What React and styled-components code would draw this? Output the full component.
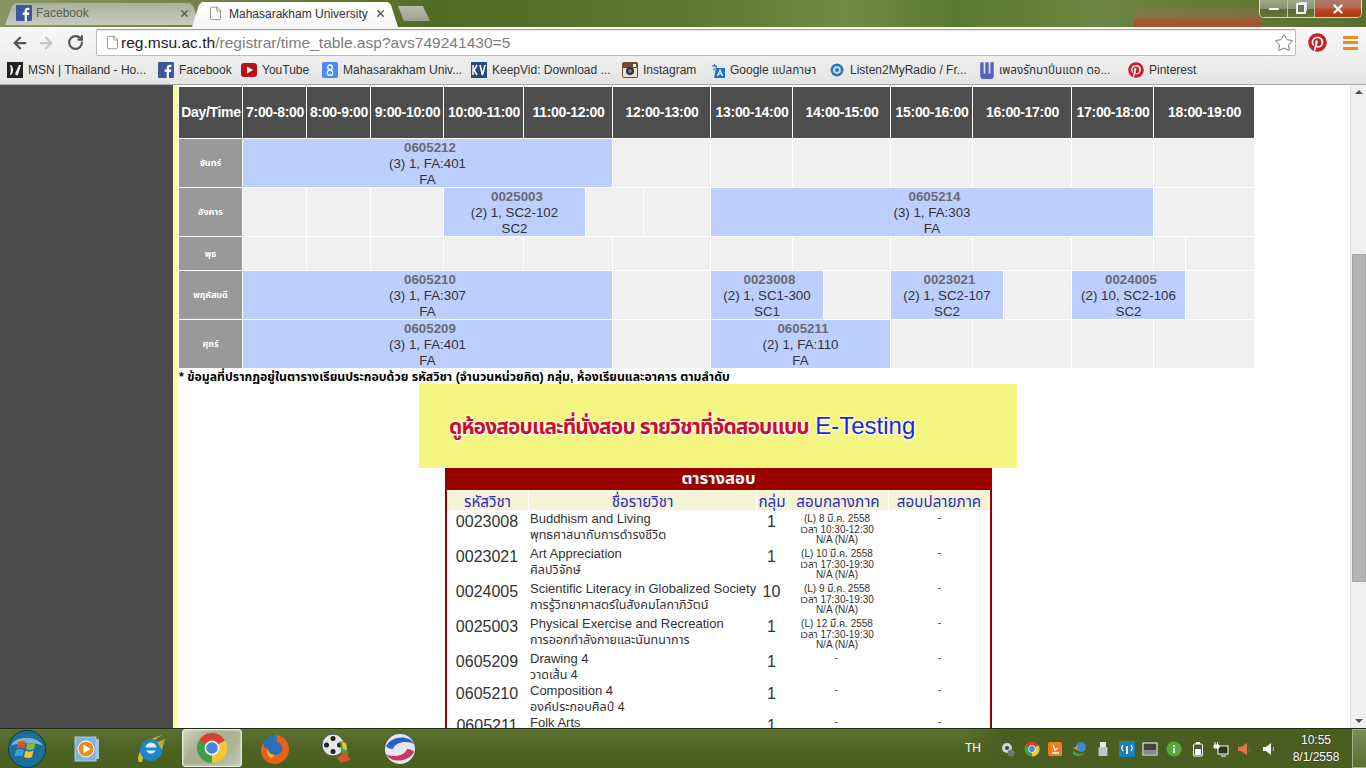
import React from 'react';
import styled, { createGlobalStyle } from 'styled-components';
import { ArrowLeft, ArrowRight, RotateCw, Star, X, Minus, File } from 'lucide-react';
import { FaPinterest } from 'react-icons/fa';

const FONT = '"Liberation Sans", "Noto Sans Thai", "Noto Sans", sans-serif';

const Global = createGlobalStyle`
  html, body { margin: 0; padding: 0; height: 100%; overflow: hidden; background: #4c4c4c; }
  * { box-sizing: border-box; }
  body { font-family: ${FONT}; }
`;

const Screen = styled.div`
  width: 1366px; height: 768px; display: flex; flex-direction: column; overflow: hidden;
`;

/* ---------- browser chrome ---------- */
const TitleBar = styled.div`
  height: 27px; display: flex; align-items: flex-end; padding-left: 5px; position: relative;
  background:
    linear-gradient(180deg, transparent 7px, rgba(150,110,90,.45) 10px, rgba(150,105,85,.5) 17px, #a9572f 20px, #a5532c 27px) 1134px 0 / 128px 27px no-repeat,
    linear-gradient(90deg, #8a9566 0, #66762f 25%, #4f6b24 32%, #5f7a31 52%, #6f8b42 62%, #5a7a2e 70%, #6c8540 80%, #596f2c 100%);
`;
const TabShape = styled.div`
  height: ${p => (p.$active ? 25 : 22)}px;
  width: ${p => p.$w}px;
  margin-left: ${p => p.$ml || 0}px;
  margin-bottom: ${p => (p.$active ? 0 : 2)}px;
  display: flex; align-items: center; gap: ${p => (p.$active ? 6 : 4)}px;
  padding: 0 ${p => (p.$active ? 12 : 10)}px 2px ${p => (p.$active ? 16 : 11)}px;
  font-size: 12px; white-space: nowrap;
  color: ${p => (p.$active ? '#333' : '#5a6050')};
  position: relative; z-index: ${p => (p.$active ? 2 : 1)};
  clip-path: polygon(0 100%, 7px 3px, 10px 0, calc(100% - 10px) 0, calc(100% - 7px) 3px, 100% 100%);
  background: ${p => (p.$active ? 'linear-gradient(180deg,#fff,#f6f6f6)' : 'linear-gradient(180deg,#a9b196,#c8cbc0)')};
`;
const TabLabel = styled.span`flex: 1; overflow: hidden;`;
const NewTab = styled.div`
  width: 32px; height: 15px; margin: 0 0 6px 0; background: linear-gradient(180deg,#b9bcae,#9da18c);
  clip-path: polygon(0 0, 78% 0, 100% 100%, 18% 100%);
`;
const WinControls = styled.div`
  margin-left: auto; margin-right: 4px; align-self: flex-start; height: 18px; width: 103px;
  display: flex; border: 1px solid #d5dcc8; border-top: none; border-radius: 0 0 5px 5px; overflow: hidden;
`;
const WinBtn = styled.div`
  width: ${p => p.$w}px; display: flex; align-items: center; justify-content: center; color: #fff;
  border-right: ${p => (p.$last ? 'none' : '1px solid #b9c2a5')};
  background: ${p => (p.$close
    ? 'linear-gradient(180deg,#b0786a 0,#b46a55 45%,#c0421b 60%,#a73b1d 100%)'
    : 'linear-gradient(180deg,#9fa88a 0,#8a9472 50%,#5b6b32 55%,#63733a 100%)')};
`;
const MaxGlyph = styled.div`
  width: 10px; height: 11px; border: 2px solid #eef; box-shadow: 2px -2px 0 -1px #dde; background: #6b7a48;
`;

const Toolbar = styled.div`
  height: 31px; display: flex; align-items: center; padding: 0 8px 0 11px;
  background: linear-gradient(180deg,#f8f8f8,#eeeeee);
`;
const NavBtn = styled.div`
  width: ${p => p.$w}px; display: flex; align-items: center; color: ${p => p.$c};
`;
const Omnibox = styled.div`
  width: 1201px; margin-left: 3px; height: 27px; background: #fff; border: 1px solid #bdbdbd; border-top-color: #9f9f9f;
  border-radius: 2px; display: flex; align-items: center; padding: 0 1px 0 8px;
  box-shadow: inset 0 1px 1px rgba(0,0,0,.08);
`;
const Url = styled.div`
  flex: 1; margin-left: 1px; font-size: 15.55px; color: #222; white-space: nowrap;
`;
const UrlPath = styled.span`color: #7d7d7d;`;
const PinBtn = styled.div`margin-left: 12px; display: flex; color: #c8202a;`;
const Menu = styled.div`
  margin-left: 16px; width: 15px; height: 14px; display: flex; flex-direction: column; justify-content: space-between;
`;
const MenuBar = styled.div`height: 3px; background: #ec8c1c;`;

const Bookmarks = styled.div`
  height: 27px; display: flex; align-items: center; padding: 0 0 2px 7px;
  background: linear-gradient(180deg,#eeeeee,#e4e4e4); border-bottom: 1px solid #a6a6a6;
`;
const Bookmark = styled.div`
  width: ${p => p.$w}px; display: flex; align-items: center; gap: ${p => p.$gap ?? 5}px;
  font-size: 12px; color: #333; white-space: nowrap;
`;
const BookmarkThai = styled.span`font-size: 11.7px;`;
const IconBox = styled.svg`flex: none; display: block;`;

/* ---------- page ---------- */
const Page = styled.div`flex: 1; min-height: 0; display: flex; background: #fff; overflow: hidden;`;
const SideGrey = styled.div`width: 173px; flex: none; background: #4c4c4c;`;
const Content = styled.div`
  width: 1177px; flex: none; border-left: 5px solid #ffff99; background: #fff; overflow: hidden;
  display: flex; flex-direction: column; padding-top: 2px;
`;
const Scrollbar = styled.div`
  width: 16px; flex: none; background: #f0f0f0; border-left: 1px solid #e6e6e6; display: flex; flex-direction: column; align-items: center;
`;
const ArrowUp = styled.div`
  margin-top: 5px; width: 0; height: 0; border: 4px solid transparent; border-top: none; border-bottom: 4px solid #505050;
`;
const ArrowDown = styled.div`
  margin: auto 0 5px; width: 0; height: 0; border: 4px solid transparent; border-bottom: none; border-top: 4px solid #505050;
`;
const Thumb = styled.div`margin-top: 160px; width: 14px; height: 328px; background: #b4b4b4; border: 1px solid #a8a8a8;`;

const Sheet = styled.div`width: 1080px; display: flex; flex-direction: column; align-items: center;`;
const Timetable = styled.div`
  align-self: flex-start; margin-left: 1px; width: 1075px; display: flex; flex-direction: column; gap: 1px;
`;
const TRow = styled.div`
  display: grid; grid-template-columns: ${p => p.$cols}; column-gap: 1px; min-height: ${p => p.$h}px;
`;
const HeadCell = styled.div`
  background: #4d4d4d; color: #fff; font-weight: 700; font-size: 14px; letter-spacing: -.32px; padding: 0 0 2px 1px;
  display: flex; align-items: center; justify-content: center; white-space: nowrap;
`;
const DayCell = styled.div`
  background: #999; color: #fff; font-weight: 700; font-size: 9px;
  display: flex; align-items: center; justify-content: center;
`;
const Empty = styled.div`background: #f0f0f0;`;
const Course = styled.div`
  background: #bccfff; color: #333; font-size: 13.33px; line-height: 16px; text-align: center; height: 48px; padding-top: 1px; overflow: hidden;
`;
const Code = styled.div`font-weight: 700; color: #6a6a72; padding-left: 5px;`;
const Note = styled.div`
  align-self: flex-start; margin-left: 1px; height: 16px; line-height: 18px; font-size: 12.3px; font-weight: 700; color: #000; white-space: nowrap;
`;
const Banner = styled.div`
  width: 598px; height: 84px; background: #f5f582; padding: 25px 0 0 30px; white-space: nowrap;
  line-height: 34px; text-shadow: 0 0 3px #fff, 0 0 3px #fff, 1px 1px 2px #fff;
`;
const BannerRed = styled.span`color: #c8102e; font-weight: 700; font-size: 21px; letter-spacing: -.9px;`;
const BannerBlue = styled.span`color: #1a28d8; font-weight: 400; font-size: 24px; margin-left: 2px;`;

const ExamBox = styled.div`
  width: 547px; border: solid #990000; border-width: 0 2px; flex: none; margin-left: 1px;
`;
const ExamTitle = styled.div`
  margin: 0 -2px; height: 22px; background: #990000; color: #fff; font-weight: 700; font-size: 16.7px;
  display: flex; align-items: center; justify-content: center;
`;
const EXAM_COLS = '82px 228px 31px 101px 101px';
const ExamHead = styled.div`
  display: grid; grid-template-columns: ${EXAM_COLS}; grid-template-rows: 20px; height: 20px;
`;
const ExamTh = styled.div`
  height: 20px; margin-right: 1px; background: #f5f5d5; color: #2a2ac8; font-size: 15.2px; text-align: center; line-height: 24px; white-space: nowrap;
`;
const ExamRow = styled.div`
  display: grid; grid-template-columns: ${EXAM_COLS}; grid-template-rows: ${p => p.$h}px; height: ${p => p.$h}px; color: #333;
`;
const ExamCode = styled.div`font-size: 16px; line-height: 24px; text-align: center; padding-right: 2px;`;
const ExamName = styled.div`padding: 1px 0 0 1px; font-size: 13px; line-height: 16px; white-space: nowrap;`;
const ExamThai = styled.div`font-size: 12.5px; line-height: 16px;`;
const ExamGroup = styled.div`font-size: 16px; line-height: 24px; text-align: center; padding-right: 2px;`;
const ExamDate = styled.div`font-size: 10px; line-height: 10.5px; text-align: center; padding-top: 4px; padding-right: 3px; white-space: nowrap;`;
const ExamDash = styled.div`font-size: 10px; line-height: 10.5px; text-align: center; padding-top: 3px; padding-right: ${p => p.$pr || 0}px;`;

/* ---------- taskbar ---------- */
const Taskbar = styled.div`
  height: 40px; flex: none; display: flex; align-items: center; border-top: 1px solid #232b10;
  background: linear-gradient(180deg,#5d7133 0,#4d6323 50%,#48601f 100%);
`;
const Orb = styled.div`width: 57px; display: flex; justify-content: center; padding-right: 3px;`;
const Apps = styled.div`display: flex; gap: 2.6px; height: 100%;`;
const AppBtn = styled.div`
  width: 60px; display: flex; align-items: center; justify-content: center;
  ${p => p.$active && `
    background: linear-gradient(135deg,#cfd4bd 0,#a7b08e 35%,#aeb596 70%,#c5cab4 100%);
    border: 1px solid #e6e8dc; border-radius: 3px; box-shadow: inset 0 0 2px #fff; margin: 0 0 1px;
  `}
`;
const Tray = styled.div`
  margin-left: auto; display: flex; align-items: center; height: 100%; color: #fff;
  background: linear-gradient(90deg, transparent, #4b5e22 40px);
`;
const Lang = styled.div`width: 35px; font-size: 12px; text-align: left; margin-top: -2px;`;
const TrayIcons = styled.div`display: flex; width: 284px; justify-content: space-between; align-items: center; padding-right: 7px;`;
const Clock = styled.div`
  width: 68px; font-size: 12px; line-height: 17px; text-align: center; padding-right: 4px; text-shadow: 0 0 2px #222;
`;
const ShowDesktop = styled.div`
  width: 14px; height: 100%; background: linear-gradient(180deg,#7d8b5a,#5b6e30);
  border: 1px solid #a6b088; border-right: none;
`;

/* ---------- drawings ---------- */
const Svg = ({ s = 16, v = 16, children }) => <IconBox width={s} height={s} viewBox={`0 0 ${v} ${v}`}>{children}</IconBox>;

const Fb = () => (
  <Svg><rect width="16" height="16" rx="1" fill="#3b5998" />
    <path d="M11 16v-6h2l.3-2.4H11V6.2c0-.7.2-1.2 1.2-1.2h1.2V2.9C13.2 2.8 12.5 2.8 11.7 2.8 9.9 2.8 8.7 3.9 8.7 5.9v1.7H6.700V10h2v6z" fill="#fff" /></Svg>
);
const Msn = () => (
  <Svg><rect width="16" height="16" fill="#222" />
    <path d="M3 3c2 0 3 2 3 5s-1 5-3 5c1-3 1-7 0-10zM8 12l4-9h2l-3 10c-1 1-2 0-3-1z" fill="#eee" /></Svg>
);
const Yt = () => (
  <Svg><rect y="1" width="16" height="14" rx="3" fill="#b31217" /><path d="M6 4.5l6 3.5-6 3.5z" fill="#fff" /></Svg>
);
const G8 = () => (
  <Svg><rect width="16" height="16" rx="2" fill="#4a8af4" />
    <circle cx="8" cy="5.300" r="2.300" fill="none" stroke="#fff" strokeWidth="1.300" />
    <circle cx="8" cy="10.700" r="2.700" fill="none" stroke="#fff" strokeWidth="1.300" /></Svg>
);
const Kv = () => (
  <Svg><rect width="16" height="16" fill="#2b4a80" />
    <path d="M2 3v10M6 3L3 8l3 5M9 3l2.5 10L14 3" fill="none" stroke="#fff" strokeWidth="1.5" /></Svg>
);
const Insta = () => (
  <Svg><rect width="16" height="16" rx="2" fill="#6b4a32" /><rect x="1" y="6" width="14" height="9" fill="#e8e0d0" />
    <circle cx="8" cy="9" r="4" fill="#333" /><circle cx="8" cy="9" r="2" fill="#5b7fa6" /><rect x="11" y="2" width="3" height="3" fill="#cfc" /></Svg>
);
const Translate = () => (
  <Svg><path d="M1 1h8l5 14H4z" fill="#dfe8f5" /><path d="M7 6h9v10H5z" fill="#1e6fd0" />
    <path d="M3 4h5M5.5 2v2M4 8c2-1 3-2 3.5-4" stroke="#2b5aa0" fill="none" />
    <path d="M8.5 14l2.500-6 2.500 6M9.500 12h3" stroke="#fff" fill="none" strokeWidth="1.200" /></Svg>
);
const Listen = () => (
  <Svg><circle cx="8" cy="8" r="6.500" fill="#2a7ab0" /><circle cx="8" cy="8" r="3.800" fill="#cfe4f2" /><circle cx="8" cy="8" r="2" fill="#2a7ab0" /></Svg>
);
const WLogo = () => (
  <Svg s={18}><path d="M2 1h3v10h1.500V1h3v10H11V1h3v12c0 2-1 3-3 3H5c-2 0-3-1-3-3z" fill="#5560c8" /></Svg>
);
const ChromeLogo = ({ s = 32 }) => (
  <Svg s={s} v={32}>
    <path d="M16 16L3 8.500A15 15 0 0 1 29 8.500Z" fill="#d8412f" />
    <path d="M16 16L29 8.500A15 15 0 0 1 16 31Z" fill="#f4c82e" />
    <path d="M16 16L16 31A15 15 0 0 1 3 8.500Z" fill="#3f9e48" />
    <circle cx="16" cy="16" r="7.500" fill="#eef2f6" /><circle cx="16" cy="16" r="5.800" fill="#4a86d8" />
  </Svg>
);
const WinOrb = () => (
  <Svg s={38} v={38}>
    <circle cx="19" cy="19" r="18.500" fill="#1c6f96" stroke="#0d3a52" />
    <path d="M3 16C6 5 30 5 35 16c-6-4-26-4-32 0z" fill="#9fd4e6" opacity=".7" />
    <path d="M10 12c3-1.500 5-1.500 8 0l-1.500 6.500c-3-1.500-5-1.500-8 0z" fill="#e2512c" />
    <path d="M19.500 12.500c3 1.500 5 1.500 8 0L26 19c-3 1.500-5 1.500-8 0z" fill="#8dbb3c" />
    <path d="M8 20c3-1.500 5-1.500 8 0l-1.500 6.500c-3-1.500-5-1.500-8 0z" fill="#3f9fdc" />
    <path d="M17.500 20.500c3 1.500 5 1.500 8 0L24 27c-3 1.500-5 1.500-8 0z" fill="#f2c22f" />
  </Svg>
);
const Wmp = () => (
  <Svg s={28} v={28}>
    <rect x="22" y="4" width="4" height="20" fill="#9cc6e6" /><rect x="2" y="2" width="21" height="24" fill="#7fb2da" stroke="#a8cce8" />
    <circle cx="13" cy="14" r="8" fill="#f08a1e" stroke="#fff" strokeWidth="1" /><path d="M10.500 9.500l7 4.500-7 4.500z" fill="#fff" />
  </Svg>
);
const IeLogo = () => (
  <Svg s={34} v={34}>
    <path d="M6 30C2 24 12 6 30 3 24 5 12 14 9 30z" fill="#e3b52c" />
    <circle cx="18" cy="18" r="11" fill="#1d86c8" /><circle cx="18" cy="16" r="5.500" fill="#d8eef8" />
    <rect x="12" y="15.500" width="16" height="3" fill="#1d86c8" /><path d="M11 22h17l-4 5h-8z" fill="#1d86c8" />
    <path d="M29 18l3-11-8 3z" fill="#e3b52c" opacity=".8" />
  </Svg>
);
const FoxLogo = () => (
  <Svg s={34} v={34}>
    <circle cx="17" cy="16" r="13" fill="#2c6fb8" />
    <path d="M17 3c8 0 14 6 14 14 0 8-6 15-14 15C9 32 3 26 3 18c0-2 1-5 2-7 0 3 2 5 5 6 0 3 3 6 7 6 5 0 8-4 7-8-1-3-3-5-6-5 2-2 2-5-1-7z" fill="#e4621c" />
    <path d="M10 17c0 3 3 6 7 6l-3 3c-4-1-6-5-4-9z" fill="#f7b22c" />
  </Svg>
);
const Reel = () => (
  <Svg s={34} v={34}>
    <circle cx="13" cy="13" r="11" fill="#e6e6e6" stroke="#555" /><circle cx="13" cy="6.500" r="2.500" fill="#222" /><circle cx="6.500" cy="13" r="2.500" fill="#222" />
    <circle cx="19.500" cy="13" r="2.500" fill="#222" /><circle cx="13" cy="19.500" r="2.500" fill="#222" />
    <path d="M20 9l6 2 2 12-7-2z" fill="#4aa04a" /><path d="M17 26l8-6 6 8-10 3z" fill="#d8552a" /><path d="M22 10l4 1 1 7-4-1z" fill="#e9c53a" />
  </Svg>
);
const Swirl = () => (
  <Svg s={34} v={34}>
    <circle cx="17" cy="17" r="15" fill="#e4e8f2" />
    <path d="M3 14C8 4 26 2 31 12 24 8 12 10 10 17 7 17 4 16 3 14z" fill="#2c5fc8" />
    <path d="M31 20C26 30 8 32 3 22c7 4 19 2 21-5 3 0 6 1 7 3z" fill="#c83a5c" />
  </Svg>
);

const Gears = () => <Svg><circle cx="7" cy="7" r="5" fill="#cfd5d8" /><circle cx="7" cy="7" r="2" fill="#444" /><circle cx="11" cy="12" r="3.500" fill="#777" /></Svg>;
const Avast = () => <Svg><rect x="1" y="1" width="14" height="14" rx="2" fill="#ef7d22" /><path d="M5 12h7M6 4l2 5 3-2" stroke="#fff" fill="none" strokeWidth="1.300" /></Svg>;
const Idm = () => <Svg><circle cx="10" cy="6" r="5" fill="#3d8ad0" /><path d="M2 9c3 4 7 5 12 3-3 3-9 4-12 1z" fill="#4aa84a" /><path d="M2 7l5-2-1 4z" fill="#e0a020" /></Svg>;
const Usb = () => <Svg><rect x="5" y="1" width="6" height="5" fill="#e8e8e8" /><rect x="3.500" y="6" width="9" height="9" rx="1" fill="#c4c4c4" /></Svg>;
const Wifi = () => <Svg><rect width="16" height="16" fill="#1b80c0" /><path d="M4 4a5 5 0 0 0 0 6M12 4a5 5 0 0 1 0 6" stroke="#fff" fill="none" strokeWidth="1.300" /><rect x="7" y="5" width="2" height="8" fill="#fff" /></Svg>;
const Screenbox = () => <Svg><rect x="1" y="2" width="14" height="12" fill="#444" stroke="#fff" /><rect x="2" y="9" width="12" height="4" fill="#888" /></Svg>;
const Info = () => <Svg><circle cx="8" cy="8" r="7.500" fill="#5aa83a" /><rect x="7" y="7" width="2" height="5" fill="#fff" /><rect x="7" y="4" width="2" height="2" fill="#fff" /></Svg>;
const Battery = () => <Svg><rect x="6" y="1" width="4" height="2" fill="#fff" /><rect x="3.500" y="3" width="9" height="12" rx="1" fill="none" stroke="#fff" /><rect x="5" y="8" width="6" height="6" fill="#fff" /></Svg>;
const Net = () => <Svg><rect x="5" y="5" width="10" height="8" fill="#2b3518" stroke="#fff" /><path d="M2 1v5M4.500 1v5M1 4h5v3H1z" stroke="#fff" fill="#fff" /><path d="M8 15h5" stroke="#fff" /></Svg>;
const SpeakerRed = () => <Svg><path d="M1 6h3l6-4v12l-6-4H1z" fill="#e2764a" /><path d="M12 5c1 2 1 4 0 6" stroke="#7d5a34" fill="none" strokeWidth="1.500" /></Svg>;
const SpeakerWhite = () => <Svg><path d="M2 6h3l5-4v12l-5-4H2z" fill="#f4f4f4" /><path d="M12 6c.7 1.300.7 2.700 0 4" stroke="#bbb" fill="none" /></Svg>;

/* ---------- data ---------- */
const HEAD_EDGES = [179, 243, 307, 371, 444, 524, 613, 711, 793, 891, 973, 1072, 1154, 1255];
const colsOf = edges => edges.slice(1).map((e, i) => `${e - edges[i] - 1}px`).join(' ');
const HEADS = ['Day/Time', '7:00-8:00', '8:00-9:00', '9:00-10:00', '10:00-11:00', '11:00-12:00', '12:00-13:00', '13:00-14:00', '14:00-15:00', '15:00-16:00', '16:00-17:00', '17:00-18:00', '18:00-19:00'];

const c = (a, b, d) => ({ a, b, d });
const ROWS = [
  { day: 'จันทร์', h: 48, edges: [179, 243, 613, 711, 793, 891, 973, 1072, 1154, 1255],
    cells: [c('0605212', '(3) 1, FA:401', 'FA'), 0, 0, 0, 0, 0, 0, 0] },
  { day: 'อังคาร', h: 48, edges: [179, 243, 307, 371, 444, 586, 644, 711, 1154, 1255],
    cells: [0, 0, 0, c('0025003', '(2) 1, SC2-102', 'SC2'), 0, 0, c('0605214', '(3) 1, FA:303', 'FA'), 0] },
  { day: 'พุธ', h: 33, edges: [179, 243, 307, 371, 444, 524, 613, 711, 793, 891, 973, 1072, 1154, 1186, 1255],
    cells: [0, 0, 0, 0, 0, 0, 0, 0, 0, 0, 0, 0, 0] },
  { day: 'พฤหัสบดี', h: 48, edges: [179, 243, 613, 711, 824, 891, 1004, 1072, 1186, 1255],
    cells: [c('0605210', '(3) 1, FA:307', 'FA'), 0, c('0023008', '(2) 1, SC1-300', 'SC1'), 0, c('0023021', '(2) 1, SC2-107', 'SC2'), 0, c('0024005', '(2) 10, SC2-106', 'SC2'), 0] },
  { day: 'ศุกร์', h: 48, edges: [179, 243, 613, 711, 891, 973, 1072, 1154, 1255],
    cells: [c('0605209', '(3) 1, FA:401', 'FA'), 0, c('0605211', '(2) 1, FA:110', 'FA'), 0, 0, 0, 0] },
];

const TIME = ['เวลา 10:30-12:30', 'เวลา 17:30-19:30'];
const EXAMS = [
  { code: '0023008', en: 'Buddhism and Living', th: 'พุทธศาสนากับการดำรงชีวิต', g: '1', date: '(L) 8 มี.ค. 2558', t: TIME[0], h: 35 },
  { code: '0023021', en: 'Art Appreciation', th: 'ศิลปวิจักษ์', g: '1', date: '(L) 10 มี.ค. 2558', t: TIME[1], h: 35 },
  { code: '0024005', en: 'Scientific Literacy in Globalized Society', th: 'การรู้วิทยาศาสตร์ในสังคมโลกาภิวัตน์', g: '10', date: '(L) 9 มี.ค. 2558', t: TIME[1], h: 35 },
  { code: '0025003', en: 'Physical Exercise and Recreation', th: 'การออกกำลังกายและนันทนาการ', g: '1', date: '(L) 12 มี.ค. 2558', t: TIME[1], h: 35 },
  { code: '0605209', en: 'Drawing 4', th: 'วาดเส้น 4', g: '1', h: 32 },
  { code: '0605210', en: 'Composition 4', th: 'องค์ประกอบศิลป์ 4', g: '1', h: 32 },
  { code: '0605211', en: 'Folk Arts', th: 'ศิลปะพื้นบ้าน', g: '1', h: 32 },
];

const BOOKMARKS = [
  { w: 151, icon: <Msn />, text: 'MSN | Thailand - Ho...' },
  { w: 83, icon: <Fb />, text: 'Facebook' },
  { w: 81, icon: <Yt />, text: 'YouTube' },
  { w: 149, icon: <G8 />, text: 'Mahasarakham Univ...' },
  { w: 151, icon: <Kv />, text: 'KeepVid: Download ...' },
  { w: 87, icon: <Insta />, text: 'Instagram' },
  { w: 120, icon: <Translate />, text: <>Google <BookmarkThai>แปลภาษา</BookmarkThai></> },
  { w: 149, icon: <Listen />, text: 'Listen2MyRadio / Fr...' },
  { w: 150, icon: <WLogo />, gap: 3, text: <BookmarkThai>เพลงรักมาปิ่นแตก ตอ...</BookmarkThai> },
  { w: 80, icon: <FaPinterest size={16} color="#c8202a" />, text: 'Pinterest' },
];

export default function App() {
  return (
    <Screen>
      <Global />
      <TitleBar>
        <TabShape $w={195}>
          <Fb /><TabLabel>Facebook</TabLabel><X size={11} strokeWidth={3} color="#555" />
        </TabShape>
        <TabShape $active $w={206} $ml={-8}>
          <File size={15} strokeWidth={1.2} color="#777" /><TabLabel>Mahasarakham University</TabLabel><X size={11} strokeWidth={3} color="#555" />
        </TabShape>
        <NewTab />
        <WinControls>
          <WinBtn $w={28}><Minus size={14} strokeWidth={3.5} /></WinBtn>
          <WinBtn $w={27}><MaxGlyph /></WinBtn>
          <WinBtn $w={46} $close $last><X size={14} strokeWidth={4} /></WinBtn>
        </WinControls>
      </TitleBar>

      <Toolbar>
        <NavBtn $w={26} $c="#555"><ArrowLeft size={18} strokeWidth={3} /></NavBtn>
        <NavBtn $w={30} $c="#c4c4c4"><ArrowRight size={18} strokeWidth={3} /></NavBtn>
        <NavBtn $w={26} $c="#555"><RotateCw size={17} strokeWidth={3} /></NavBtn>
        <Omnibox>
          <File size={15} strokeWidth={1.2} color="#777" />
          <Url>reg.msu.ac.th<UrlPath>/registrar/time_table.asp?avs749241430=5</UrlPath></Url>
          <Star size={20} strokeWidth={1.2} color="#777" />
        </Omnibox>
        <PinBtn><FaPinterest size={19} /></PinBtn>
        <Menu><MenuBar /><MenuBar /><MenuBar /></Menu>
      </Toolbar>

      <Bookmarks>
        {BOOKMARKS.map((b, i) => (
          <Bookmark key={i} $w={b.w} $gap={b.gap}>{b.icon}<span>{b.text}</span></Bookmark>
        ))}
      </Bookmarks>

      <Page>
        <SideGrey />
        <Content>
          <Sheet>
            <Timetable>
              <TRow $cols={colsOf(HEAD_EDGES)} $h={51}>
                {HEADS.map(h => <HeadCell key={h}>{h}</HeadCell>)}
              </TRow>
              {ROWS.map(r => (
                <TRow key={r.day} $cols={colsOf(r.edges)} $h={r.h}>
                  <DayCell>{r.day}</DayCell>
                  {r.cells.map((cell, i) => (cell
                    ? <Course key={i}><Code>{cell.a}</Code><div>{cell.b}</div><div>{cell.d}</div></Course>
                    : <Empty key={i} />))}
                </TRow>
              ))}
            </Timetable>
            <Note>* ข้อมูลที่ปรากฏอยู่ในตารางเรียนประกอบด้วย รหัสวิชา (จำนวนหน่วยกิต) กลุ่ม, ห้องเรียนและอาคาร ตามลำดับ</Note>
            <Banner><BannerRed>ดูห้องสอบและที่นั่งสอบ รายวิชาที่จัดสอบแบบ</BannerRed> <BannerBlue>E-Testing</BannerBlue></Banner>
            <ExamBox>
              <ExamTitle>ตารางสอบ</ExamTitle>
              <ExamHead>
                <ExamTh>รหัสวิชา</ExamTh><ExamTh>ชื่อรายวิชา</ExamTh><ExamTh>กลุ่ม</ExamTh><ExamTh>สอบกลางภาค</ExamTh><ExamTh>สอบปลายภาค</ExamTh>
              </ExamHead>
              {EXAMS.map(e => (
                <ExamRow key={e.code} $h={e.h}>
                  <ExamCode>{e.code}</ExamCode>
                  <ExamName>{e.en}<ExamThai>{e.th}</ExamThai></ExamName>
                  <ExamGroup>{e.g}</ExamGroup>
                  {e.date
                    ? <ExamDate>{e.date}<br />{e.t}<br />N/A (N/A)</ExamDate>
                    : <ExamDash $pr={4}>-</ExamDash>}
                  <ExamDash>-</ExamDash>
                </ExamRow>
              ))}
            </ExamBox>
          </Sheet>
        </Content>
        <Scrollbar><ArrowUp /><Thumb /><ArrowDown /></Scrollbar>
      </Page>

      <Taskbar>
        <Orb><WinOrb /></Orb>
        <Apps>
          <AppBtn><Wmp /></AppBtn>
          <AppBtn><IeLogo /></AppBtn>
          <AppBtn $active><ChromeLogo /></AppBtn>
          <AppBtn><FoxLogo /></AppBtn>
          <AppBtn><Reel /></AppBtn>
          <AppBtn><Swirl /></AppBtn>
        </Apps>
        <Tray>
          <Lang>TH</Lang>
          <TrayIcons>
            <Gears /><ChromeLogo s={16} /><Avast /><Idm /><Usb /><Wifi /><Screenbox /><Info /><Battery /><Net /><SpeakerRed /><SpeakerWhite />
          </TrayIcons>
          <Clock>10:55<br />8/1/2558</Clock>
          <ShowDesktop />
        </Tray>
      </Taskbar>
    </Screen>
  );
}
